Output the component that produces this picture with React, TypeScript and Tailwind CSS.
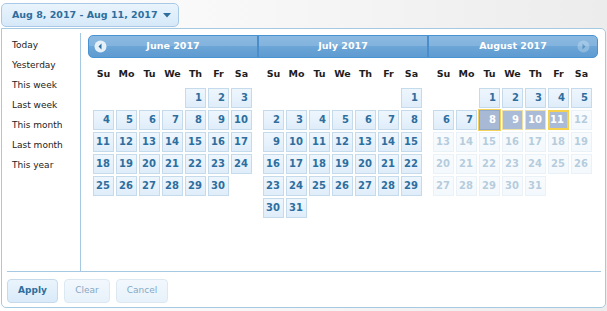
import React from "react";

type Cell = { day: number; state: "normal" | "off" | "start" | "mid" | "end" } | null;

const font = { fontFamily: '"DejaVu Sans", Verdana, sans-serif' };

const buildMonth = (offset: number, days: number, state: (d: number) => Cell) => {
  const cells: Cell[] = [];
  for (let i = 0; i < offset; i++) cells.push(null);
  for (let d = 1; d <= days; d++) cells.push(state(d));
  return cells;
};

const months = [
  { title: "June 2017", cells: buildMonth(4, 30, (d) => ({ day: d, state: "normal" })) },
  { title: "July 2017", cells: buildMonth(6, 31, (d) => ({ day: d, state: "normal" })) },
  {
    title: "August 2017",
    cells: buildMonth(2, 31, (d) => ({
      day: d,
      state: d < 8 ? "normal" : d === 8 ? "start" : d === 11 ? "end" : d < 11 ? "mid" : "off",
    })),
  },
];

const weekdays = ["Su", "Mo", "Tu", "We", "Th", "Fr", "Sa"];
const ranges = ["Today", "Yesterday", "This week", "Last week", "This month", "Last month", "This year"];

const DayCell = ({ cell }: { cell: Cell }) => {
  if (!cell) return <div />;
  const base = "flex items-center justify-end pr-[3px] text-[10px] font-bold leading-none";
  if (cell.state === "start")
    return (
      <div className={`${base} border border-[#8fa8cc] bg-[#a7b9d5] text-white outline outline-1 outline-[#f2d25c]`}>
        {cell.day}
      </div>
    );
  if (cell.state === "mid")
    return <div className={`${base} border border-[#eee0a4] bg-[#a9bbd6] text-white`}>{cell.day}</div>;
  if (cell.state === "end")
    return <div className={`${base} border-2 border-[#f6d24c] bg-[#a9bbd6] text-white`}>{cell.day}</div>;
  return (
    <div
      className={`${base} border border-[#c5dbec] bg-[linear-gradient(to_bottom,#eef6fd,#dfedfa)] text-[#2e6e9e] ${
        cell.state === "off" ? "opacity-35" : ""
      }`}
    >
      {cell.day}
    </div>
  );
};

const Arrow = ({ dir, faded }: { dir: "l" | "r"; faded?: boolean }) => (
  <svg width="13" height="13" viewBox="0 0 13 13" className={faded ? "opacity-30" : ""}>
    <circle cx="6.5" cy="6.5" r="6" fill="#e6f0f9" />
    {dir === "l" ? <path d="M7.5 3.5 L4.5 6.5 L7.5 9.5 Z" fill="#2e6e9e" /> : <path d="M5.5 3.5 L8.5 6.5 L5.5 9.5 Z" fill="#2e6e9e" />}
  </svg>
);

export default function App() {
  return (
    <div className="h-[311px] w-[607px] overflow-hidden bg-[linear-gradient(to_right,#ffffff,#ececec)] pl-[1px] pt-[3px]" style={font}>
      <div className="flex h-[24px] w-[178px] items-center rounded-[5px] border border-[#a9cae6] bg-[linear-gradient(to_bottom,#e9f4fc,#d6e9f9)] pl-[10px] text-[9.5px] font-bold text-[#2e6e9e]">
        <span>Aug 8, 2017 - Aug 11, 2017</span>
        <svg width="8" height="5" viewBox="0 0 8 5" className="ml-[5px]">
          <path d="M0 0 L8 0 L4 4.5 Z" fill="#2e6e9e" />
        </svg>
      </div>

      <div className="mt-[1px] w-[605px] rounded-tr-[5px] rounded-b-[5px] border border-[#a6c9e2] bg-white pl-[5px] pr-[4px] pt-[4px]">
        <div className="flex h-[238px]">
          <ul className="w-[74px] shrink-0 border-r border-[#a6c9e2] pl-[5px] pt-[3px] text-[9px] text-[#222]">
            {ranges.map((r) => (
              <li key={r} className="flex h-[20px] items-center">
                {r}
              </li>
            ))}
          </ul>

          <div className="pl-[7px] pt-[2px]">
            <div className="flex h-[23px] w-[510px] overflow-hidden rounded-[5px] border border-[#4a93d2] bg-[linear-gradient(to_bottom,#8bb9e0_0%,#82b3dd_50%,#6ca5d6_50%,#5e9bd1_100%)] text-[9.5px] font-bold text-white">
              {months.map((m, i) => (
                <div
                  key={m.title}
                  className={`relative flex items-center justify-center ${i < 2 ? "w-[170px] border-r-2 border-[#4a8dcb]" : "flex-1"}`}
                >
                  {i === 0 && (
                    <span className="absolute left-[5px] top-[4px]">
                      <Arrow dir="l" />
                    </span>
                  )}
                  {i === 2 && (
                    <span className="absolute right-[7px] top-[4px]">
                      <Arrow dir="r" faded />
                    </span>
                  )}
                  {m.title}
                </div>
              ))}
            </div>

            <div className="flex">
              {months.map((m) => (
                <div key={m.title} className="w-[170px] pl-[5px] pt-[6px]">
                  <div className="grid h-[20px] grid-cols-[repeat(7,21px)] gap-x-[2px] text-[9.5px] font-bold text-[#1e1e1e]">
                    {weekdays.map((w) => (
                      <div key={w} className="flex items-center justify-center">
                        {w}
                      </div>
                    ))}
                  </div>
                  <div className="mt-[4px] grid auto-rows-[20px] grid-cols-[repeat(7,21px)] gap-[2px]">
                    {m.cells.map((c, i) => (
                      <DayCell key={i} cell={c} />
                    ))}
                  </div>
                </div>
              ))}
            </div>
          </div>
        </div>

        <div className="flex h-[36px] border-t border-[#a6c9e2] pt-[7px]">
          <button className="h-[24px] w-[51px] rounded-[4px] border border-[#c5dbec] bg-[linear-gradient(to_bottom,#eaf4fc,#d9eaf9)] text-[9px] font-bold text-[#2e6e9e]">
            Apply
          </button>
          <button className="ml-[6px] h-[24px] w-[46px] rounded-[4px] border border-[#c5dbec] bg-[linear-gradient(to_bottom,#eaf4fc,#d9eaf9)] text-[9px] text-[#2e6e9e] opacity-60">
            Clear
          </button>
          <button className="ml-[6px] h-[24px] w-[52px] rounded-[4px] border border-[#c5dbec] bg-[linear-gradient(to_bottom,#eaf4fc,#d9eaf9)] text-[9px] text-[#2e6e9e] opacity-60">
            Cancel
          </button>
        </div>
      </div>
    </div>
  );
}
